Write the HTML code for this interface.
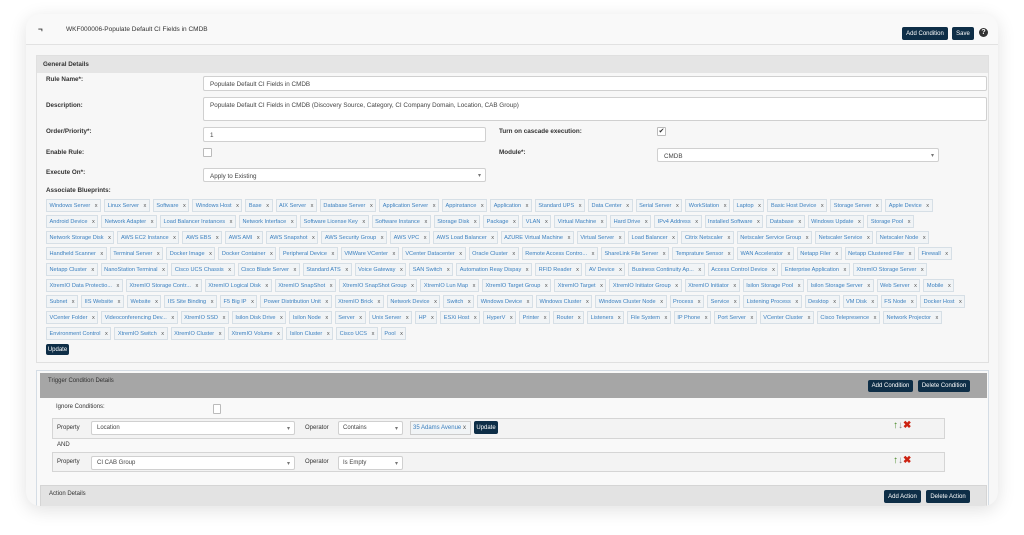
<!DOCTYPE html>
<html><head><meta charset="utf-8"><style>
*{box-sizing:border-box;margin:0;padding:0}
body{width:1024px;height:535px;background:#fff;font-family:"Liberation Sans",sans-serif;position:relative;overflow:hidden;color:#333}
.card{position:absolute;left:26px;top:14px;width:972px;height:492px;background:#f7f7f7;border-radius:14px;box-shadow:0 4px 18px rgba(0,0,0,.12);overflow:hidden}
.top{position:absolute;left:0;top:0;width:100%;height:31px;background:#f9f9f9;border-bottom:1px solid #e2e2e2}
.abs{position:absolute}
.btn{position:absolute;background:#0e2e47;color:#fff;font-size:6px;border-radius:2px;display:flex;align-items:center;justify-content:center}
.lbl{position:absolute;font-size:6.3px;font-weight:bold;color:#333}
.inp{position:absolute;background:#fff;border:1px solid #d0d0d0;border-radius:2px;font-size:6.3px;padding:4px 6px;color:#444}
.sel::after{content:"▾";position:absolute;right:4px;top:3px;font-size:6px;color:#777}
.cb{position:absolute;width:9px;height:9px;border:1px solid #bbb;background:#fff;border-radius:1px;font-size:7px;line-height:7px;text-align:center}
.row{position:absolute;left:20px;white-space:nowrap;height:13px}
.t{display:inline-block;height:13px;line-height:12px;border:1px solid #d6dfe6;background:#f1f4f6;color:#3a7fbf;font-size:5.6px;padding:0 2.5px;margin-right:3px;vertical-align:top}
.t::after{content:" x";color:#555;padding-left:3px}
</style></head><body>
<div class="card">
 <div class="top">
  <div class="abs" style="left:12px;top:11px;font-size:8px;font-weight:bold">¬</div>
  <div class="abs" style="left:40px;top:12px;font-size:6.5px;color:#333">WKF000006-Populate Default CI Fields in CMDB</div>
  <div class="btn" style="left:876px;top:13px;width:46px;height:13px">Add Condition</div>
  <div class="btn" style="left:926px;top:13px;width:22px;height:13px">Save</div>
  <div class="abs" style="left:953px;top:14px;width:9px;height:9px;border-radius:50%;background:#333;color:#fff;font-size:7px;line-height:9px;text-align:center;font-weight:bold">?</div>
 </div>
 <div class="abs" style="left:10px;top:41px;width:953px;height:308px;background:#f7f7f7;border:1px solid #e0e0e0">
  <div style="height:17px;background:#e5e5e5;font-size:6.3px;font-weight:bold;padding:5px 6px">General Details</div>
 </div>
 <div class="lbl" style="left:20px;top:62px">Rule Name*:</div>
 <div class="inp" style="left:177px;top:62px;width:784px;height:15px">Populate Default CI Fields in CMDB</div>
 <div class="lbl" style="left:20px;top:88px">Description:</div>
 <div class="inp" style="left:177px;top:83px;width:784px;height:24px">Populate Default CI Fields in CMDB (Discovery Source, Category, CI Company Domain, Location, CAB Group)</div>
 <div class="lbl" style="left:20px;top:114px">Order/Priority*:</div>
 <div class="inp" style="left:177px;top:113px;width:283px;height:15px">1</div>
 <div class="lbl" style="left:473px;top:114px">Turn on cascade execution:</div>
 <div class="cb" style="left:631px;top:113px">✔</div>
 <div class="lbl" style="left:20px;top:135px">Enable Rule:</div>
 <div class="cb" style="left:177px;top:134px"></div>
 <div class="lbl" style="left:473px;top:135px">Module*:</div>
 <div class="inp sel" style="left:631px;top:134px;width:282px;height:14px">CMDB</div>
 <div class="lbl" style="left:20px;top:155px">Execute On*:</div>
 <div class="inp sel" style="left:177px;top:154px;width:283px;height:14px">Apply to Existing</div>
 <div class="lbl" style="left:20px;top:173px">Associate Blueprints:</div>
 <div class="row" style="top:185px"><span class="t">Windows Server</span><span class="t">Linux Server</span><span class="t">Software</span><span class="t">Windows Host</span><span class="t">Base</span><span class="t">AIX Server</span><span class="t">Database Server</span><span class="t">Application Server</span><span class="t">Appinstance</span><span class="t">Application</span><span class="t">Standard UPS</span><span class="t">Data Center</span><span class="t">Serial Server</span><span class="t">WorkStation</span><span class="t">Laptop</span><span class="t">Basic Host Device</span><span class="t">Storage Server</span><span class="t">Apple Device</span></div>
 <div class="row" style="top:201px"><span class="t">Android Device</span><span class="t">Network Adapter</span><span class="t">Load Balancer Instances</span><span class="t">Network Interface</span><span class="t">Software License Key</span><span class="t">Software Instance</span><span class="t">Storage Disk</span><span class="t">Package</span><span class="t">VLAN</span><span class="t">Virtual Machine</span><span class="t">Hard Drive</span><span class="t">IPv4 Address</span><span class="t">Installed Software</span><span class="t">Database</span><span class="t">Windows Update</span><span class="t">Storage Pool</span></div>
 <div class="row" style="top:217px"><span class="t">Network Storage Disk</span><span class="t">AWS EC2 Instance</span><span class="t">AWS EBS</span><span class="t">AWS AMI</span><span class="t">AWS Snapshot</span><span class="t">AWS Security Group</span><span class="t">AWS VPC</span><span class="t">AWS Load Balancer</span><span class="t">AZURE Virtual Machine</span><span class="t">Virtual Server</span><span class="t">Load Balancer</span><span class="t">Citrix Netscaler</span><span class="t">Netscaler Service Group</span><span class="t">Netscaler Service</span><span class="t">Netscaler Node</span></div>
 <div class="row" style="top:233px"><span class="t">Handheld Scanner</span><span class="t">Terminal Server</span><span class="t">Docker Image</span><span class="t">Docker Container</span><span class="t">Peripheral Device</span><span class="t">VMWare VCenter</span><span class="t">VCenter Datacenter</span><span class="t">Oracle Cluster</span><span class="t">Remote Access Contro...</span><span class="t">ShareLink File Server</span><span class="t">Temprature Sensor</span><span class="t">WAN Accelerator</span><span class="t">Netapp Filer</span><span class="t">Netapp Clustered Filer</span><span class="t">Firewall</span></div>
 <div class="row" style="top:249px"><span class="t">Netapp Cluster</span><span class="t">NanoStation Terminal</span><span class="t">Cisco UCS Chassis</span><span class="t">Cisco Blade Server</span><span class="t">Standard ATS</span><span class="t">Voice Gateway</span><span class="t">SAN Switch</span><span class="t">Automation Reay Dispay</span><span class="t">RFID Reader</span><span class="t">AV Device</span><span class="t">Business Continuity Ap...</span><span class="t">Access Control Device</span><span class="t">Enterprise Application</span><span class="t">XtremIO Storage Server</span></div>
 <div class="row" style="top:265px"><span class="t">XtremIO Data Protectio...</span><span class="t">XtremIO Storage Contr...</span><span class="t">XtremIO Logical Disk</span><span class="t">XtremIO SnapShot</span><span class="t">XtremIO SnapShot Group</span><span class="t">XtremIO Lun Map</span><span class="t">XtremIO Target Group</span><span class="t">XtremIO Target</span><span class="t">XtremIO Initiator Group</span><span class="t">XtremIO Initiator</span><span class="t">Isilon Storage Pool</span><span class="t">Isilon Storage Server</span><span class="t">Web Server</span><span class="t">Mobile</span></div>
 <div class="row" style="top:281px"><span class="t">Subnet</span><span class="t">IIS Website</span><span class="t">Website</span><span class="t">IIS Site Binding</span><span class="t">F5 Big IP</span><span class="t">Power Distribution Unit</span><span class="t">XtremIO Brick</span><span class="t">Network Device</span><span class="t">Switch</span><span class="t">Windows Device</span><span class="t">Windows Cluster</span><span class="t">Windows Cluster Node</span><span class="t">Process</span><span class="t">Service</span><span class="t">Listening Process</span><span class="t">Desktop</span><span class="t">VM Disk</span><span class="t">FS Node</span><span class="t">Docker Host</span></div>
 <div class="row" style="top:297px"><span class="t">VCenter Folder</span><span class="t">Videoconferencing Dev...</span><span class="t">XtremIO SSD</span><span class="t">Isilon Disk Drive</span><span class="t">Isilon Node</span><span class="t">Server</span><span class="t">Unix Server</span><span class="t">HP</span><span class="t">ESXi Host</span><span class="t">HyperV</span><span class="t">Printer</span><span class="t">Router</span><span class="t">Listeners</span><span class="t">File System</span><span class="t">IP Phone</span><span class="t">Port Server</span><span class="t">VCenter Cluster</span><span class="t">Cisco Telepresence</span><span class="t">Network Projector</span></div>
 <div class="row" style="top:313px"><span class="t">Environment Control</span><span class="t">XtremIO Switch</span><span class="t">XtremIO Cluster</span><span class="t">XtremIO Volume</span><span class="t">Isilon Cluster</span><span class="t">Cisco UCS</span><span class="t">Pool</span></div>
 <div class="btn" style="left:20px;top:330px;width:23px;height:11px">Update</div>

 <div class="abs" style="left:10px;top:356px;width:953px;height:140px;border:1px solid #d5dde5;background:#f9f9f9"></div>
 <div class="abs" style="left:14px;top:359px;width:947px;height:25px;background:#a6a6a6;font-size:6px;color:#333;padding:5px 8px">Trigger Condition Details</div>
 <div class="btn" style="left:842px;top:366px;width:45px;height:12px">Add Condition</div>
 <div class="btn" style="left:892px;top:366px;width:52px;height:12px">Delete Condition</div>
 <div class="abs" style="left:30px;top:390px;font-size:6px">Ignore Conditions:</div>
 <div class="cb" style="left:187px;top:390px;width:8px;height:10px"></div>
 <div class="abs" style="left:26px;top:404px;width:893px;height:21px;border:1px solid #d5d5d5;background:#f3f3f3"></div>
 <div class="abs" style="left:31px;top:411px;font-size:6px">Property</div>
 <div class="inp sel" style="left:65px;top:407px;width:204px;height:14px;padding:3px 5px;font-size:6px">Location</div>
 <div class="abs" style="left:279px;top:411px;font-size:6px">Operator</div>
 <div class="inp sel" style="left:312px;top:407px;width:65px;height:14px;padding:3px 4px;font-size:6px">Contains</div>
 <div class="abs" style="left:384px;top:407px;width:61px;height:14px;border:1px solid #ccc;background:#f1f4f6;font-size:6px;color:#3a7fbf;padding:3px 2px">35 Adams Avenue <span style="color:#555">x</span></div>
 <div class="btn" style="left:448px;top:407px;width:24px;height:13px">Update</div>
 <div class="abs" style="left:867px;top:406px;font-size:10px;font-weight:bold"><span style="color:#4a8a2a">↑</span><span style="color:#888">↓</span><span style="color:#c21">✖</span></div>
 <div class="abs" style="left:31px;top:428px;font-size:6px">AND</div>
 <div class="abs" style="left:26px;top:438px;width:893px;height:20px;border:1px solid #d5d5d5;background:#f3f3f3"></div>
 <div class="abs" style="left:31px;top:445px;font-size:6px">Property</div>
 <div class="inp sel" style="left:65px;top:442px;width:204px;height:14px;padding:3px 5px;font-size:6px">CI CAB Group</div>
 <div class="abs" style="left:279px;top:445px;font-size:6px">Operator</div>
 <div class="inp sel" style="left:312px;top:442px;width:65px;height:14px;padding:3px 4px;font-size:6px">Is Empty</div>
 <div class="abs" style="left:867px;top:441px;font-size:10px;font-weight:bold"><span style="color:#4a8a2a">↑</span><span style="color:#888">↓</span><span style="color:#c21">✖</span></div>

 <div class="abs" style="left:14px;top:471px;width:947px;height:30px;background:#e3e3e3;border:1px solid #d5d5d5;font-size:6px;padding:5px 8px">Action Details</div>
 <div class="btn" style="left:858px;top:476px;width:37px;height:13px">Add Action</div>
 <div class="btn" style="left:900px;top:476px;width:44px;height:13px">Delete Action</div>
</div>
</body></html>
